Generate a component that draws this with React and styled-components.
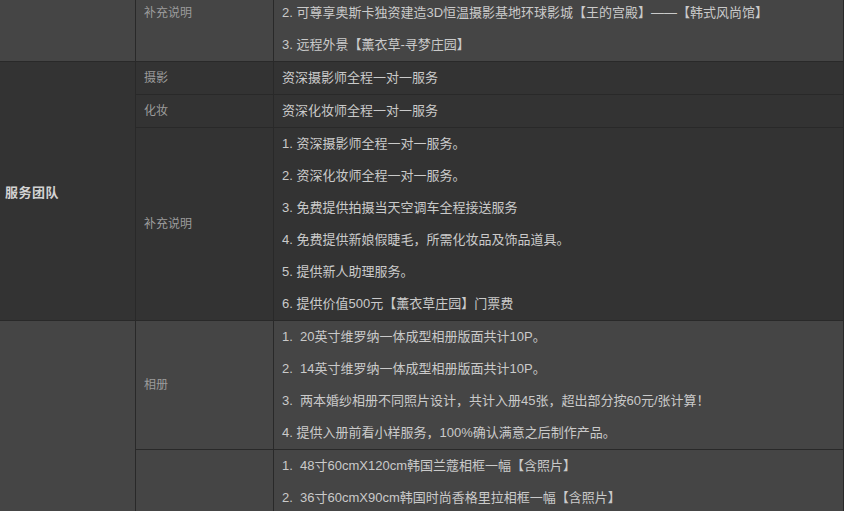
import React from "react";
import styled, { createGlobalStyle } from "styled-components";

const groups = [
  {
    title: "",
    tone: "light",
    rows: [
      {
        label: "补充说明",
        top: true,
        lines: [
          "2. 可尊享奥斯卡独资建造3D恒温摄影基地环球影城【王的宫殿】——【韩式风尚馆】",
          "3. 远程外景【薰衣草-寻梦庄园】",
        ],
      },
    ],
  },
  {
    title: "服务团队",
    tone: "dark",
    rows: [
      { label: "摄影", lines: ["资深摄影师全程一对一服务"] },
      { label: "化妆", lines: ["资深化妆师全程一对一服务"] },
      {
        label: "补充说明",
        lines: [
          "1. 资深摄影师全程一对一服务。",
          "2. 资深化妆师全程一对一服务。",
          "3. 免费提供拍摄当天空调车全程接送服务",
          "4. 免费提供新娘假睫毛，所需化妆品及饰品道具。",
          "5. 提供新人助理服务。",
          "6. 提供价值500元【薰衣草庄园】门票费",
        ],
      },
    ],
  },
  {
    title: "",
    tone: "light",
    rows: [
      {
        label: "相册",
        lines: [
          "1.\u00a0 20英寸维罗纳一体成型相册版面共计10P。",
          "2.\u00a0 14英寸维罗纳一体成型相册版面共计10P。",
          "3.\u00a0 两本婚纱相册不同照片设计，共计入册45张，超出部分按60元/张计算！",
          "4. 提供入册前看小样服务，100%确认满意之后制作产品。",
        ],
      },
      {
        label: "",
        lines: [
          "1.\u00a0 48寸60cmX120cm韩国兰蔻相框一幅【含照片】",
          "2.\u00a0 36寸60cmX90cm韩国时尚香格里拉相框一幅【含照片】",
        ],
      },
    ],
  },
];

const App = () => {
  return (
    <>
      <GlobalStyle />
      <Page>
        <Table>
          <colgroup>
            <col style={{ width: 136 }} />
            <col style={{ width: 138 }} />
            <col />
          </colgroup>
          {groups.map((group, gi) => (
            <Group key={gi} $tone={group.tone}>
              {group.rows.map((row, ri) => (
                <tr key={ri}>
                  {ri === 0 && (
                    <TitleCell rowSpan={group.rows.length}>{group.title}</TitleCell>
                  )}
                  <LabelCell $top={row.top}>{row.label}</LabelCell>
                  <TextCell>
                    {row.lines.map((line, li) => (
                      <Line key={li}>{line}</Line>
                    ))}
                  </TextCell>
                </tr>
              ))}
            </Group>
          ))}
        </Table>
      </Page>
    </>
  );
};

export default App;

const GlobalStyle = createGlobalStyle`
  html, body {
    margin: 0;
    padding: 0;
    background: #333333;
    overflow: hidden;
  }
  body {
    font-family: "Liberation Sans", "Noto Sans CJK SC", sans-serif;
  }
`;

const Page = styled.div`
  width: 844px;
  height: 511px;
  overflow: hidden;
`;

const Table = styled.table`
  width: 844px;
  margin-top: -3px;
  table-layout: fixed;
  border-collapse: separate;
  border-spacing: 0;
  font-size: 13px;
`;

const Group = styled.tbody`
  background: ${(p) => (p.$tone === "dark" ? "#333333" : "#454545")};

  td {
    box-sizing: border-box;
    border-right: 1px solid #292929;
    border-bottom: 1px solid #292929;
  }
`;

const TitleCell = styled.td`
  padding: 0 5px;
  vertical-align: middle;
  color: #d2d2d2;
  font-weight: 700;
  font-size: 13px;
  letter-spacing: 0.5px;
`;

const LabelCell = styled.td`
  padding: 0 8px;
  vertical-align: ${(p) => (p.$top ? "top" : "middle")};
  line-height: 32px;
  color: #9c9c9c;
  font-size: 12px;
`;

const TextCell = styled.td`
  padding: 0 8px;
  vertical-align: top;
  color: #cacaca;
`;

const Line = styled.div`
  height: 32px;
  line-height: 32px;
  white-space: nowrap;
`;
